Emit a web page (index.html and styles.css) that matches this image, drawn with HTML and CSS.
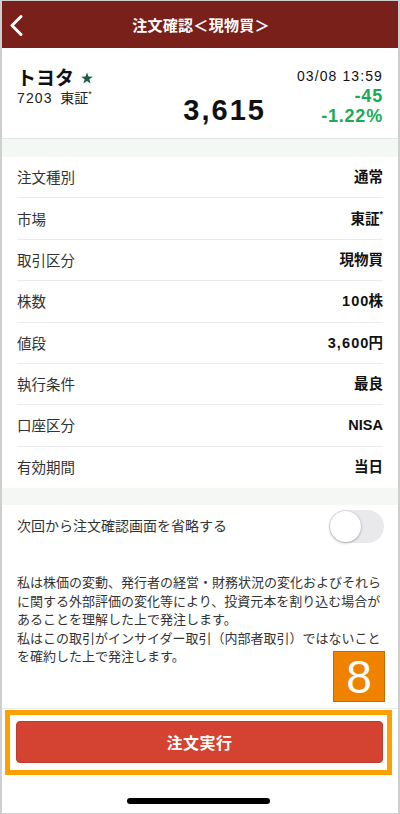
FILE: index.html
```html
<!DOCTYPE html>
<html lang="ja">
<head>
<meta charset="utf-8">
<link rel="stylesheet" href="styles.css">
</head>
<body>
<div class="frame">
  <header class="topbar">
    <svg class="back" width="16" height="24" viewBox="0 0 16 24"><polyline points="12,2.5 3,11.5 12,20.5" fill="none" stroke="#fff" stroke-width="3" stroke-linecap="round" stroke-linejoin="round"/></svg>
    <h1 class="title">注文確認＜現物買＞</h1>
  </header>

  <section class="stock">
    <div class="stock-left">
      <div class="stock-name">トヨタ <svg class="star" width="12" height="12" viewBox="0 0 24 24"><polygon points="12,1 15,9 23.5,9.3 16.8,14.6 19.2,23 12,18.1 4.8,23 7.2,14.6 0.5,9.3 9,9" fill="#1b5e45"/></svg></div>
      <div class="stock-code"><span class="num">7203</span>&nbsp; 東証<sup>*</sup></div>
    </div>
    <div class="stock-price">3,615</div>
    <div class="stock-right">
      <div class="stock-time">03/08 13:59</div>
      <div class="stock-chg">-45</div>
      <div class="stock-chg">-1.22%</div>
    </div>
  </section>

  <div class="band"></div>

  <ul class="rows">
    <li class="row"><span class="label">注文種別</span><span class="value">通常</span></li>
    <li class="row"><span class="label">市場</span><span class="value">東証<sup>*</sup></span></li>
    <li class="row"><span class="label">取引区分</span><span class="value">現物買</span></li>
    <li class="row"><span class="label">株数</span><span class="value"><span class="num">100</span>株</span></li>
    <li class="row"><span class="label">値段</span><span class="value"><span class="num">3,600</span>円</span></li>
    <li class="row"><span class="label">執行条件</span><span class="value">最良</span></li>
    <li class="row"><span class="label">口座区分</span><span class="value">NISA</span></li>
    <li class="row"><span class="label">有効期間</span><span class="value">当日</span></li>
  </ul>

  <div class="band band-small"></div>

  <div class="skip-row">
    <span class="label">次回から注文確認画面を省略する</span>
    <span class="toggle"><span class="knob"></span></span>
  </div>

  <p class="disclaimer">私は株価の変動、発行者の経営・財務状況の変化およびそれら<br>に関する外部評価の変化等により、投資元本を割り込む場合が<br>あることを理解した上で発注します。<br>私はこの取引がインサイダー取引（内部者取引）ではないこと<br>を確約した上で発注します。</p>

  <div class="step-badge">8</div>

  <footer class="footer">
    <button class="submit">注文実行</button>
    <div class="highlight"></div>
    <div class="home-indicator"></div>
  </footer>
</div>
</body>
</html>
```

FILE: styles.css
```css
* { box-sizing: border-box; }
html, body { margin: 0; padding: 0; background: #fff; }
body {
  font-family: "Liberation Sans", "Noto Sans CJK JP", sans-serif;
  color: #222;
}
.frame {
  position: relative;
  width: 400px;
  height: 814px;
  border-top: 1px solid #cfcfcf;
  border-left: 2px solid #cfcfcf;
  border-right: 2px solid #cfcfcf;
  border-bottom: 1px solid #cfcfcf;
  overflow: hidden;
  background: #fff;
}
.num { letter-spacing: 1.1px; }
.topbar {
  position: relative;
  height: 47px;
  background: #7a201a;
  display: flex;
  align-items: center;
  justify-content: center;
}
.back {
  position: absolute;
  left: 7px;
  top: 13px;
}
.title {
  margin: 0;
  color: #fff;
  font-family: "Noto Sans CJK JP", sans-serif;
  font-size: 15px;
  font-weight: 700;
  line-height: 20px;
  letter-spacing: 0.3px;
  margin-left: 2px;
}

.stock {
  height: 91px;
  display: flex;
  align-items: flex-start;
  padding: 17px 16px 12px 15px;
  border-bottom: 1px solid #e4e4e4;
}
.stock-left { flex: 0 0 auto; }
.stock-name {
  font-family: "Noto Sans CJK JP", sans-serif;
  font-size: 19px;
  font-weight: 700;
  line-height: 24px;
  color: #111;
  display: flex;
  align-items: center;
}
.star { margin-left: 7px; margin-top: 1px; }
.stock-code {
  font-size: 14px;
  line-height: 18px;
  color: #222;
}
sup {
  font-size: 9px;
  vertical-align: top;
  line-height: 1;
  position: relative;
  top: 1px;
}
.stock-price {
  align-self: flex-end;
  margin-left: auto;
  margin-right: 31px;
  font-size: 29px;
  font-weight: 700;
  line-height: 32px;
  color: #111;
  letter-spacing: 2px;
}
.stock-right {
  text-align: right;
  margin-top: 1px;
}
.stock-time {
  font-size: 14px;
  line-height: 20px;
  color: #111;
  letter-spacing: 1.1px;
  margin-right: -1px;
}
.stock-chg {
  font-size: 18px;
  font-weight: 700;
  line-height: 20px;
  color: #1aab55;
  letter-spacing: 0.8px;
  margin-right: -1px;
}

.band {
  height: 18px;
  background: #f4f8f4;
}
.band-small { height: 17px; }

.rows {
  list-style: none;
  margin: 0;
  padding: 0;
}
.row {
  height: 41.375px;
  margin: 0 15px;
  display: flex;
  align-items: center;
  justify-content: space-between;
  border-bottom: 1.5px solid #ebebeb;
}
.row:last-child { border-bottom: none; }
.label {
  font-family: "Noto Sans CJK JP", sans-serif;
  font-size: 14.5px;
  color: #333;
  line-height: 20px;
}
.value {
  font-size: 14.5px;
  font-weight: 700;
  color: #111;
  line-height: 20px;
}
.value .num { margin-right: -1px; }

.skip-row {
  height: 40px;
  margin: 0 15px;
  display: flex;
  align-items: center;
  justify-content: space-between;
}
.skip-row .label { font-size: 14px; }
.toggle {
  position: relative;
  width: 55px;
  height: 33px;
  border-radius: 17px;
  background: #e9e9eb;
  margin-top: 3px;
  margin-right: -1px;
}
.knob {
  position: absolute;
  left: 1px;
  top: 1px;
  width: 31px;
  height: 31px;
  border-radius: 50%;
  background: #fff;
  box-shadow: 0 1px 3px rgba(0,0,0,0.25), 0 0 0 0.5px rgba(0,0,0,0.08);
}

.disclaimer {
  margin: 0;
  padding: 28px 15px 0 15px;
  font-family: "Noto Sans CJK JP", sans-serif;
  font-size: 13px;
  line-height: 18.5px;
  color: #333;
  height: 164px;
  border-bottom: 1px solid #ececec;
  white-space: nowrap;
}

.step-badge {
  position: absolute;
  left: 331px;
  top: 650px;
  width: 52px;
  height: 51px;
  background: #ef8300;
  border: 1px solid #c56a00;
  color: #fff;
  font-family: "Liberation Sans", sans-serif;
  font-size: 46px;
  line-height: 50px;
  text-align: center;
}

.footer {
  position: relative;
  padding: 12px 15px 0 14px;
  height: 103px;
}
.submit {
  display: block;
  width: 100%;
  height: 42px;
  border: 1px solid #c23a2b;
  border-radius: 4px;
  background: #d44331;
  color: #fff;
  font-family: "Noto Sans CJK JP", sans-serif;
  font-size: 16px;
  font-weight: 700;
  letter-spacing: 0.5px;
  padding: 0;
}
.highlight {
  position: absolute;
  left: 3px;
  top: 1px;
  width: 387px;
  height: 65px;
  border: 5px solid #ff9f00;
  pointer-events: none;
}
.home-indicator {
  width: 143px;
  height: 6px;
  border-radius: 3px;
  background: #000;
  margin: 35px auto 0;
  position: relative;
  left: -1px;
}
```
